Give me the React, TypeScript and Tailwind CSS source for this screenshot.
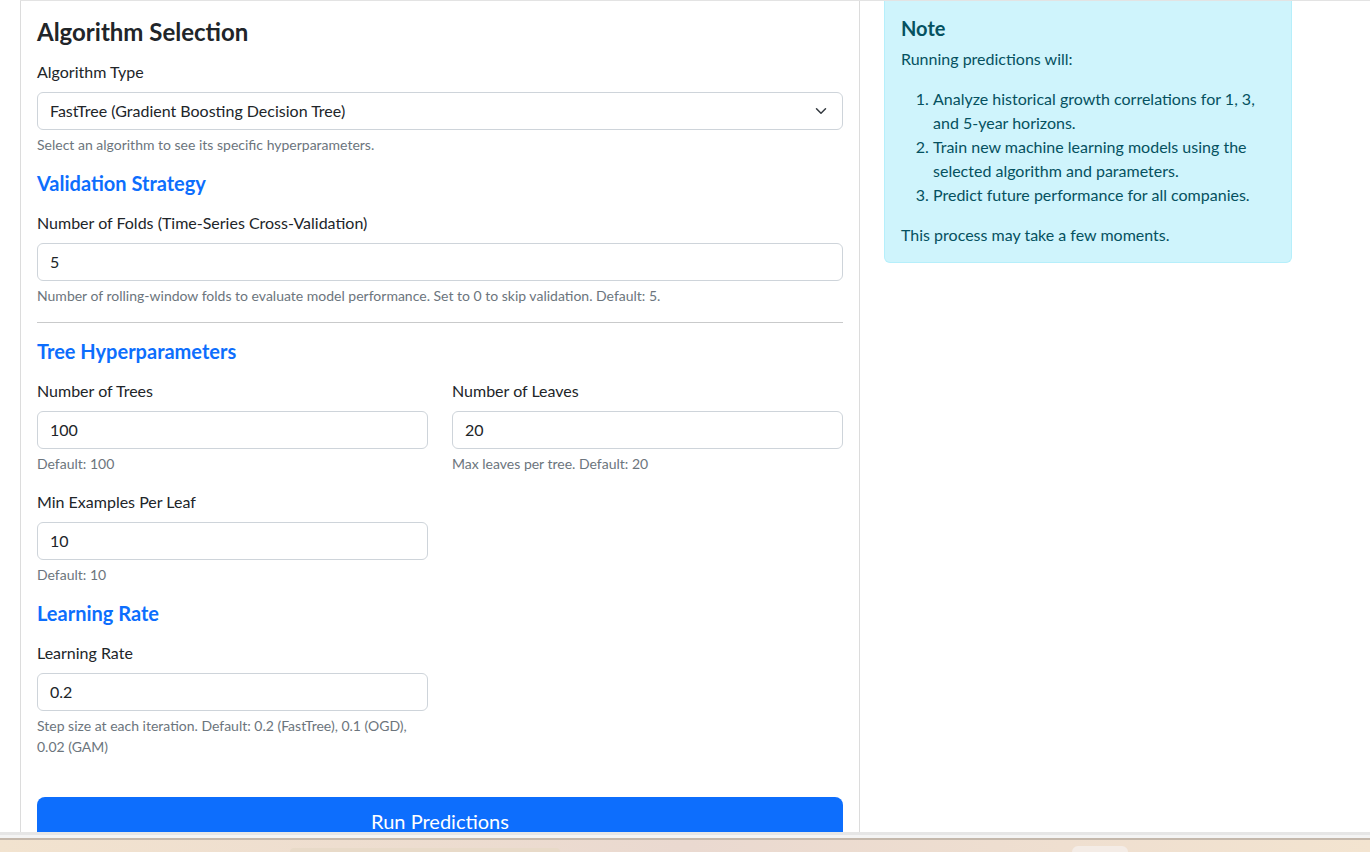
const font = { fontFamily: "Lato, 'Open Sans', sans-serif" };

function Field({ label, value, help }: { label: string; value: string; help?: string }) {
  return (
    <div className="mb-4">
      <label className="block text-[16px] leading-[24px] text-[#212529] mb-2">{label}</label>
      <div className="h-[38px] flex items-center px-3 border border-[#ced4da] rounded-[6px] bg-white text-[16px] text-[#212529]">
        {value}
      </div>
      {help && <div className="mt-1 text-[14px] leading-[21px] text-[#6c757d]">{help}</div>}
    </div>
  );
}

function SectionTitle({ children }: { children: React.ReactNode }) {
  return <h5 className="text-[20px] leading-[24px] font-bold text-[#0d6efd] mb-4">{children}</h5>;
}

export default function App() {
  return (
    <div className="h-[852px] overflow-hidden bg-white flex flex-col" style={font}>
      <div className="h-[832px] overflow-hidden">
        <div className="ml-[20px] border-t border-[#e3e3e3] flex gap-[24px] items-start">
          {/* Main card */}
          <div className="w-[840px] border-x border-[#dcdcdc] shrink-0">
            <div className="px-4 pt-4 pb-6">
              <h4 className="text-[24px] leading-[29px] font-bold text-[#212529] mb-[14px]">Algorithm Selection</h4>

              <div className="mb-4">
                <label className="block text-[16px] leading-[24px] text-[#212529] mb-2">Algorithm Type</label>
                <div className="h-[38px] flex items-center justify-between pl-3 pr-[13px] border border-[#ced4da] rounded-[6px] text-[16px] text-[#212529]">
                  <span>FastTree (Gradient Boosting Decision Tree)</span>
                  <svg width="16" height="12" viewBox="0 0 16 16" fill="none">
                    <path d="m2 5 6 6 6-6" stroke="#343a40" strokeWidth="2" strokeLinecap="round" strokeLinejoin="round" />
                  </svg>
                </div>
                <div className="mt-1 text-[14px] leading-[21px] text-[#6c757d]">
                  Select an algorithm to see its specific hyperparameters.
                </div>
              </div>

              <SectionTitle>Validation Strategy</SectionTitle>
              <Field
                label="Number of Folds (Time-Series Cross-Validation)"
                value="5"
                help="Number of rolling-window folds to evaluate model performance. Set to 0 to skip validation. Default: 5."
              />

              <hr className="border-0 border-t border-[#c9cacb] my-4" />

              <SectionTitle>Tree Hyperparameters</SectionTitle>
              <div className="grid grid-cols-2 gap-x-6">
                <Field label="Number of Trees" value="100" help="Default: 100" />
                <Field label="Number of Leaves" value="20" help="Max leaves per tree. Default: 20" />
                <Field label="Min Examples Per Leaf" value="10" help="Default: 10" />
              </div>

              <SectionTitle>Learning Rate</SectionTitle>
              <div className="grid grid-cols-2 gap-x-6">
                <Field
                  label="Learning Rate"
                  value="0.2"
                  help="Step size at each iteration. Default: 0.2 (FastTree), 0.1 (OGD), 0.02 (GAM)"
                />
              </div>

              <button className="mt-6 w-full h-[48px] rounded-[8px] bg-[#0d6efd] text-white text-[20px] leading-[30px]">
                Run Predictions
              </button>
            </div>
          </div>

          {/* Note */}
          <div className="w-[408px] shrink-0 bg-[#cff4fc] border-x border-b border-[#b6effb] rounded-b-[6px] px-4 pt-[15px] pb-[15px] text-[#055160]">
            <h5 className="text-[20px] leading-[24px] font-bold mb-[7px]">Note</h5>
            <p className="text-[16px] leading-[24px] mb-4">Running predictions will:</p>
            <ol className="list-decimal pl-8 text-[16px] leading-[24px] mb-4">
              <li>Analyze historical growth correlations for 1, 3, and 5-year horizons.</li>
              <li>Train new machine learning models using the selected algorithm and parameters.</li>
              <li>Predict future performance for all companies.</li>
            </ol>
            <p className="text-[16px] leading-[24px]">This process may take a few moments.</p>
          </div>
        </div>
      </div>

      {/* Bottom window edge / taskbar */}
      <div className="h-[3px] bg-[#e6e6e6]" />
      <div className="h-[3px] bg-[#f4f4f4]" />
      <div className="h-[2px] bg-[#c4b8ac]" />
      <div className="flex-1 bg-gradient-to-r from-[#f2e3cf] via-[#ead9d0] to-[#f3e4d0] flex items-end">
        <div className="ml-[290px] w-[270px] h-[4px] rounded-t-[6px] bg-[#e8dac8]" />
        <div className="ml-[512px] w-[56px] h-[6px] rounded-t-[6px] bg-[#f4ece6]" />
      </div>
    </div>
  );
}
